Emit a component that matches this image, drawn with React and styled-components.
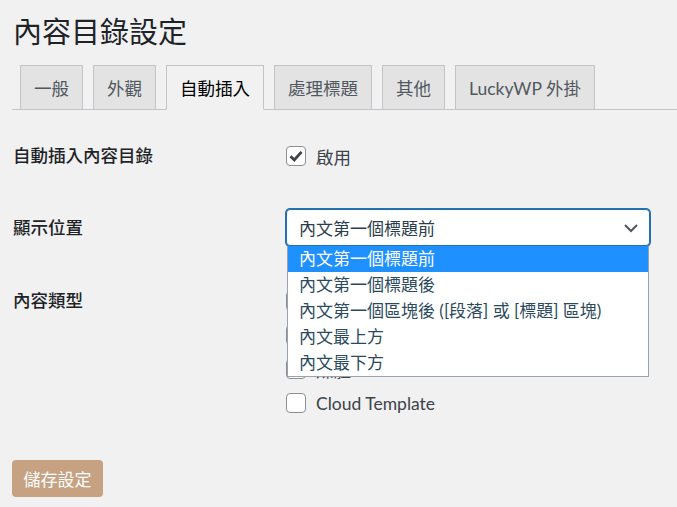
import React from "react";
import styled, { createGlobalStyle } from "styled-components";

const Global = createGlobalStyle`
  html, body { margin: 0; padding: 0; background: #f1f1f1; }
  body {
    font-family: Lato, "Noto Sans CJK TC", sans-serif;
    color: #1d2327;
    width: 677px; height: 507px; overflow: hidden;
  }
  * { box-sizing: border-box; }
`;

const Page = styled.div`
  padding: 14px 0 0 12px;
`;

const Title = styled.h1`
  margin: 0 0 15px 1px;
  font-size: 29px;
  line-height: 36px;
  font-weight: 400;
  color: #1d2327;
`;

const TabBar = styled.nav`
  display: flex;
  align-items: flex-end;
  gap: 10px;
  padding-left: 8px;
  border-bottom: 1px solid #c3c4c7;
`;

const Tab = styled.div`
  height: 45px;
  margin-bottom: -1px;
  padding: 0 13px;
  display: flex;
  align-items: center;
  font-size: 17.5px;
  font-weight: 400;
  color: ${p => (p.$active ? "#000" : "#50575e")};
  background: ${p => (p.$active ? "#f1f1f1" : "#e3e3e3")};
  border: 1px solid #c3c4c7;
  border-bottom-color: ${p => (p.$active ? "#f1f1f1" : "#c3c4c7")};
  white-space: nowrap;
`;

const Form = styled.div`
  display: flex;
  flex-direction: column;
`;

const Row = styled.div`
  display: grid;
  grid-template-columns: 274px 364px;
  align-items: ${p => p.$align || "center"};
  margin-top: ${p => p.$top}px;
`;

const Label = styled.div`
  font-size: 17.5px;
  font-weight: 500;
  line-height: 24px;
  color: #1d2327;
  padding-left: 1px;
`;

const CheckRow = styled.label`
  display: flex;
  align-items: center;
  gap: 10px;
  height: 24px;
  font-size: 17.5px;
  color: #3c434a;
  white-space: nowrap;
`;

const Box = styled.span`
  width: 20px;
  height: 20px;
  flex: none;
  border: 1px solid #8c8f94;
  border-radius: 4px;
  background: #fff;
  display: flex;
  align-items: center;
  justify-content: center;
`;

const CheckList = styled.div`
  display: flex;
  flex-direction: column;
  gap: 10px;
`;

const SelectWrap = styled.div`
  position: relative;
  width: 364px;
`;

const SelectBox = styled.div`
  height: 37px;
  border: 1px solid #2271b1;
  box-shadow: 0 0 0 1px #2271b1;
  border-radius: 4px;
  background: #fff;
  display: flex;
  align-items: center;
  justify-content: space-between;
  padding: 0 10px 0 12px;
  font-size: 17px;
  color: #2c3e4c;
`;

const Menu = styled.ul`
  position: absolute;
  top: 37px;
  left: 1px;
  width: 362px;
  margin: 0;
  padding: 0;
  list-style: none;
  background: #fff;
  border: 1px solid #9aa3ad;
  border-top: none;
  z-index: 2;
`;

const Option = styled.li`
  height: 26px;
  line-height: 26px;
  padding-left: 11px;
  font-size: 17px;
  color: ${p => (p.$sel ? "#fff" : "#2c4a5e")};
  background: ${p => (p.$sel ? "#1e90ff" : "#fff")};
  white-space: nowrap;
`;

const Button = styled.button`
  margin-top: 45px;
  align-self: flex-start;
  height: 37px;
  padding: 0 11.5px;
  border: none;
  border-radius: 4px;
  background: #c6a283;
  color: #fff;
  font-family: inherit;
  font-size: 17px;
`;

const Check = () => (
  <svg width="16" height="16" viewBox="0 0 16 16">
    <path d="M2.5 8.2 L6.3 12 L13.5 3.8" fill="none" stroke="#3c434a" strokeWidth="2.8" />
  </svg>
);

const Chevron = () => (
  <svg width="16" height="16" viewBox="0 0 16 16">
    <path d="M2 5 L8 11 L14 5" fill="none" stroke="#50575e" strokeWidth="2" />
  </svg>
);

const tabs = ["一般", "外觀", "自動插入", "處理標題", "其他", "LuckyWP 外掛"];
const options = [
  "內文第一個標題前",
  "內文第一個標題後",
  "內文第一個區塊後 ([段落] 或 [標題] 區塊)",
  "內文最上方",
  "內文最下方",
];
const types = [
  { name: "文章", on: false },
  { name: "頁面", on: false },
  { name: "媒體", on: false },
  { name: "Cloud Template", on: false },
];

export default function App() {
  return (
    <>
      <Global />
      <Page>
        <Title>內容目錄設定</Title>
        <TabBar>
          {tabs.map((t, i) => (
            <Tab key={t} $active={i === 2}>{t}</Tab>
          ))}
        </TabBar>
        <Form>
          <Row $top={34}>
            <Label>自動插入內容目錄</Label>
            <CheckRow>
              <Box><Check /></Box>
              啟用
            </CheckRow>
          </Row>
          <Row $top={41}>
            <Label>顯示位置</Label>
            <SelectWrap>
              <SelectBox>
                <span>內文第一個標題前</span>
                <Chevron />
              </SelectBox>
              <Menu>
                {options.map((o, i) => (
                  <Option key={o} $sel={i === 0}>{o}</Option>
                ))}
              </Menu>
            </SelectWrap>
          </Row>
          <Row $top={43} $align="start">
            <Label>內容類型</Label>
            <CheckList>
              {types.map(t => (
                <CheckRow key={t.name}>
                  <Box>{t.on && <Check />}</Box>
                  {t.name}
                </CheckRow>
              ))}
            </CheckList>
          </Row>
          <Button>儲存設定</Button>
        </Form>
      </Page>
    </>
  );
}
